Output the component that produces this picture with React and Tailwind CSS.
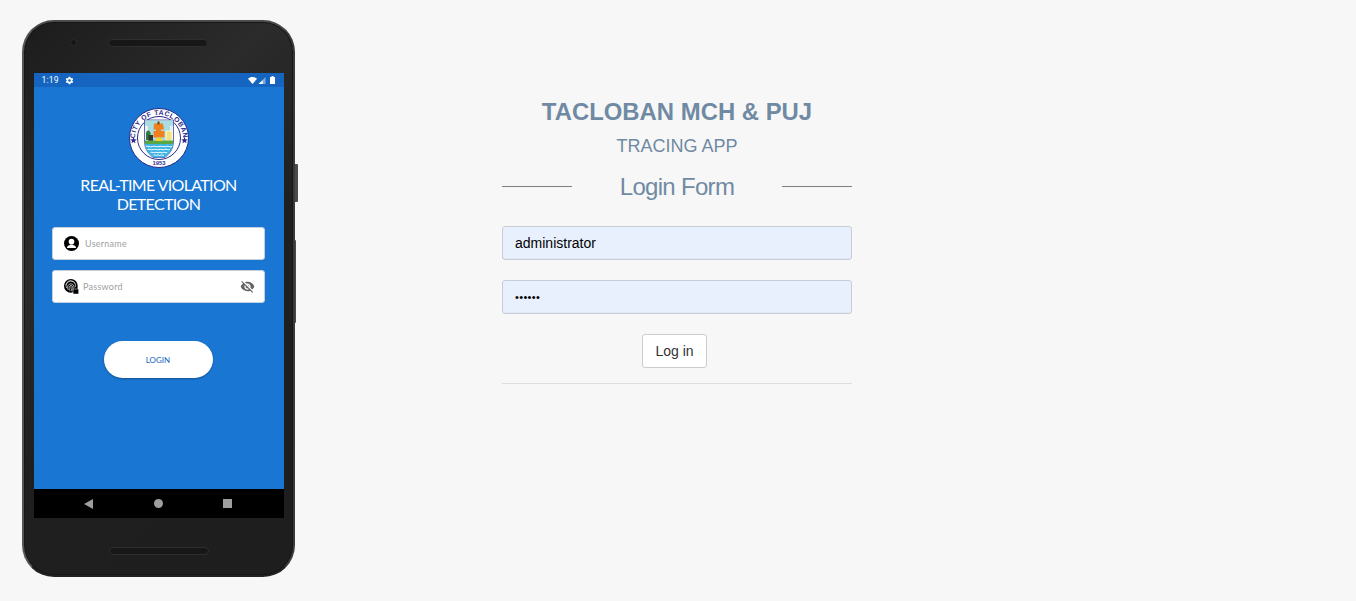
const sans = "font-['Liberation_Sans',Arial,sans-serif]";

function Seal() {
  return (
    <svg width="60" height="60" viewBox="0 0 60 60" className="block">
      <circle cx="30" cy="30" r="29.500" fill="#fff" stroke="#2b2c8c" strokeWidth="1" />
      <circle cx="30" cy="30" r="21.500" fill="#fff" stroke="#2b2c8c" strokeWidth="1" />
      <defs>
        <path id="sealArc" d="M6 31 A24 24 0 0 1 54 31" />
      </defs>
      <text fill="#2b2c8c" fontSize="6.800" fontWeight="700" fontFamily="Liberation Sans, sans-serif" letterSpacing="0.45">
        <textPath href="#sealArc" startOffset="50%" textAnchor="middle">CITY OF TACLOBAN</textPath>
      </text>
      <text x="30" y="57" textAnchor="middle" fill="#2b2c8c" fontSize="5.800" fontWeight="700" fontFamily="Liberation Sans, sans-serif">1953</text>
      <path d="M4.500 28l.9 2.300 2.500.1-2 1.500.7 2.400-2.100-1.400-2.100 1.400.7-2.400-2-1.500 2.500-.1z" fill="#2b2c8c" transform="translate(0 1)" />
      <path d="M55.500 28l.9 2.300 2.500.1-2 1.500.7 2.400-2.100-1.400-2.100 1.400.7-2.400-2-1.500 2.500-.1z" fill="#2b2c8c" transform="translate(0 1)" />
      <path d="M15.500 12h29v21c0 5-1.500 9-4 12l-4.500 4.500H24L19.500 45c-2.500-3-4-7-4-12z" fill="#e6f3f6" stroke="#2b2c8c" strokeWidth="0.700" />
      <path d="M16 12.500h28v5l-3 .5v15H19V18l-3-.5z" fill="#a9dde0" />
      <path d="M25 15.500h9l1 6h-3v1.500h3.500v6.500H24.500V23H27v-1.500h-2.500z" fill="#f07f1e" />
      <path d="M28.500 13.500h2v3h-2z" fill="#7a3a1a" />
      <path d="M17 25c1-3 3-3 4-1 1 1 1 2 0 3h-1v5h-3z" fill="#2f7d3a" />
      <path d="M19.500 27H24v6h-4.500z" fill="#333" />
      <path d="M37 23h6v10h-6z" fill="#f6e27a" stroke="#fff" strokeWidth="0.800" />
      <path d="M16 32.500h28V36H16z" fill="#5aa845" />
      <path d="M26.500 33a3.500 3.500 0 0 1 7 0z" fill="#f5d22f" />
      <path d="M16 36h28c-.3 3.500-1.500 6.500-3.500 9L36 49.200H24L19.500 45c-2-2.500-3.200-5.500-3.500-9z" fill="#3db4e6" />
      <path d="M17 38.500c2-1 4 1 6.500 0s4 1 6.500 0 4 1 6.500 0 4 1 6.500 0M18.500 41.500c2-1 3.700 1 5.800 0s3.700 1 5.700 0 3.700 1 5.700 0 3.300 1 5 0M21.500 44.500c2-1 3 1 4.300 0s3 1 4.200 0 3 1 4.200 0 2 1 4 0M24.500 47.200c2-1 2.500 1 3.500 0s2.500 1 3.500 0 2.500 1 3.500 0" fill="none" stroke="#fff" strokeWidth="1" />
    </svg>
  );
}

function PersonIcon() {
  return (
    <svg width="15" height="15" viewBox="0 0 24 24">
      <circle cx="12" cy="12" r="12" fill="#000" />
      <circle cx="12" cy="9" r="4.500" fill="#fff" />
      <path d="M4.800 19c0-3.500 4.200-5 7.200-5s7.200 1.500 7.200 5z" fill="#fff" />
    </svg>
  );
}

function FingerprintIcon() {
  return (
    <svg width="15" height="15" viewBox="0 0 24 24">
      <circle cx="11" cy="11" r="11" fill="#000" />
      <g fill="none" stroke="#fff" strokeWidth="1" strokeLinecap="round">
        <path d="M3.500 9A8 8 0 0 1 18 7" />
        <path d="M4 14a7.500 7.500 0 0 1 13-7.500c1.500 2 1.800 4 1.500 6" />
        <path d="M6.500 17a8 8 0 0 1-.5-6 5.300 5.300 0 0 1 10 .5c.4 1.500.4 3 .2 4" />
        <path d="M9.500 18.500C8 16 7.700 13.500 8.700 11.500a3 3 0 0 1 5.300 1c.3 1.500.3 3 0 4.500" />
        <path d="M11 11.500c0 3 .7 5.500 1.500 7.500" />
      </g>
      <rect x="14.500" y="16" width="9" height="8" rx="1" fill="#000" stroke="#fff" strokeWidth="0.800" />
      <path d="M17 16.500V15a2 2 0 0 1 4 0v1.500" fill="none" stroke="#000" strokeWidth="1.200" />
    </svg>
  );
}

function EyeOffIcon() {
  return (
    <svg width="15" height="15" viewBox="0 0 24 24" fill="#636363">
      <path d="M12 7c2.760 0 5 2.240 5 5 0 .650-.130 1.260-.360 1.830l2.920 2.920c1.510-1.260 2.700-2.890 3.430-4.750-1.730-4.390-6-7.500-11-7.500-1.400 0-2.740.250-3.980.700l2.160 2.160C10.740 7.130 11.350 7 12 7zM2 4.270l2.280 2.280.460.460C3.080 8.300 1.780 10.020 1 12c1.730 4.390 6 7.500 11 7.500 1.550 0 3.030-.300 4.380-.840l.420.420L19.730 22 21 20.730 3.270 3 2 4.270zM7.530 9.800l1.550 1.550c-.050.210-.080.430-.080.650 0 1.660 1.340 3 3 3 .220 0 .440-.030.650-.080l1.550 1.550c-.670.330-1.410.530-2.200.530-2.760 0-5-2.240-5-5 0-.790.200-1.530.530-2.200zm4.310-.780l3.150 3.150.020-.160c0-1.660-1.340-3-3-3l-.170.010z" />
    </svg>
  );
}

function PhoneInput({ icon, label, trailing, iconGap }) {
  return (
    <div className="flex items-center h-[33px] w-[213px] bg-white rounded-[3px] border border-[#c6cfdc] pl-[9px] pr-[9px]">
      <span className="flex w-[18px] justify-center">{icon}</span>
      <span className={`${iconGap} font-['Lato',sans-serif] text-[9px] tracking-[0.25px] text-[#a0a0a0]`}>{label}</span>
      {trailing && <span className="ml-auto flex">{trailing}</span>}
    </div>
  );
}

function StatusBar() {
  return (
    <div className="h-[14px] bg-[#1565c0] flex items-center pl-[8px] pr-[9px] text-white">
      <span className="pt-px font-['Roboto',sans-serif] text-[8.500px] leading-none tracking-[0.2px]">1:19</span>
      <svg className="ml-[6px]" width="9" height="9" viewBox="0 0 24 24" fill="#fff">
        <path d="M19.400 13c.100-.300.100-.700.100-1s0-.700-.100-1l2.100-1.600c.200-.200.200-.400.100-.600l-2-3.500c-.100-.200-.400-.300-.600-.200l-2.500 1a7.300 7.300 0 0 0-1.700-1l-.4-2.600c0-.300-.200-.500-.500-.500h-4c-.300 0-.500.200-.500.500l-.4 2.600c-.600.300-1.200.600-1.700 1l-2.500-1c-.200-.100-.500 0-.600.200l-2 3.500c-.100.200-.100.500.100.600L4.600 11c-.100.300-.100.700-.100 1s0 .700.100 1l-2.100 1.600c-.200.200-.200.400-.1.600l2 3.500c.100.200.400.300.600.200l2.500-1c.500.400 1.100.700 1.700 1l.4 2.600c0 .300.200.500.500.500h4c.300 0 .500-.200.500-.500l.4-2.600c.600-.300 1.200-.600 1.700-1l2.500 1c.200.100.500 0 .600-.200l2-3.500c.100-.200.100-.5-.1-.6zM12 15.500a3.500 3.500 0 1 1 0-7 3.500 3.500 0 0 1 0 7z" />
      </svg>
      <svg className="ml-auto" width="9" height="7" viewBox="0 0 18 14" fill="#fff"><path d="M9 14L0 3.500C2.500 1.200 5.500 0 9 0s6.500 1.200 9 3.500z" /></svg>
      <svg className="ml-[1px]" width="8" height="7" viewBox="0 0 10 10"><path d="M10 0v10H0z" fill="#fff" opacity="0.45" /><path d="M6 4.500V10H0z" fill="#fff" /></svg>
      <svg className="ml-[4px]" width="5" height="8" viewBox="0 0 5 8" fill="#fff"><path d="M1.500 0h2v1H5v7H0V1h1.500z" /></svg>
    </div>
  );
}

function Grille() {
  return (
    <span className="block w-[100px] h-[8px] rounded-full bg-[#171717] bg-[radial-gradient(#3c3c3c_0.5px,transparent_0.7px)] bg-[length:2px_2px] border border-[#2e2e2e]" />
  );
}

function Phone() {
  return (
    <div className="relative w-[273px] h-[557px] shrink-0">
      <span className="absolute left-[271px] top-[144px] w-[5px] h-[38px] bg-[#4a4a4a] rounded-r-[1px]" />
      <span className="absolute left-[271px] top-[220px] w-[3px] h-[83px] bg-[#4a4a4a] rounded-r-[1px]" />
      <div className="relative w-full h-full rounded-[32px] border-2 border-t-[#4a4a4a] border-l-[#555] border-r-[#3a3a3a] border-b-[#222] bg-[linear-gradient(135deg,#1c1c1c_0%,#2b2b2b_30%,#1f1f1f_55%,#1e1e1e_100%)] flex flex-col items-center overflow-hidden shadow-[inset_0_0_0_1px_#161616]">
        <div className="flex items-center h-[51px] w-full shrink-0 -translate-y-[5px]">
          <span className="ml-[46px] w-[7px] h-[7px] rounded-full bg-[#14141a] border border-[#2c2c2c]" />
          <span className="ml-[31px]"><Grille /></span>
        </div>
        <div className="w-[250px] h-[445px] shrink-0 flex flex-col">
          <StatusBar />
          <div className="flex-1 bg-[#1976d2] flex flex-col items-center pt-[21px]">
            <Seal />
            <div className="mt-[7px] text-center text-white font-['Lato',sans-serif] text-[16px] leading-[19px] tracking-[-0.65px]">
              <div>REAL-TIME VIOLATION</div>
              <div>DETECTION</div>
            </div>
            <div className="mt-[14px] flex flex-col gap-[10px]">
              <PhoneInput icon={<PersonIcon />} label="Username" iconGap="ml-[5px]" />
              <PhoneInput icon={<FingerprintIcon />} label="Password" iconGap="ml-[3px]" trailing={<EyeOffIcon />} />
            </div>
            <button className="mt-[38px] mr-px w-[109px] h-[37px] rounded-full bg-white shadow-[0_1px_2px_rgba(0,0,0,0.3)] font-['Lato',sans-serif] text-[8px] text-[#1565c0]">LOGIN</button>
          </div>
          <div className="h-[29px] bg-black flex items-center">
            <svg className="ml-[50px]" width="9" height="10" viewBox="0 0 9 10" fill="#9e9e9e"><path d="M9 0v10L0 5z" /></svg>
            <span className="ml-[61px] w-[9px] h-[9px] rounded-full bg-[#9e9e9e]" />
            <span className="ml-[60px] w-[9px] h-[9px] bg-[#9e9e9e]" />
          </div>
        </div>
        <div className="mt-[29px]"><Grille /></div>
      </div>
    </div>
  );
}

function Field({ value, dots }) {
  return (
    <div className={`flex items-center h-[34px] rounded-[3px] border border-[#c8ccd4] bg-[#e8f0fe] pl-[12px] ${dots ? "text-[11px] tracking-[0.35px]" : "text-[14px]"} text-black shadow-[inset_0_-1px_1px_rgba(0,0,0,0.03)]`}>
      {value}
    </div>
  );
}

export default function App() {
  return (
    <div className={`${sans} h-[601px] w-[1356px] bg-[#f7f7f7] flex pl-[22px] pt-[20px] overflow-hidden`}>
      <Phone />
      <div className="ml-[207px] w-[350px] flex flex-col items-stretch">
        <h1 className="mt-[77px] text-center font-bold text-[23.900px] leading-[30px] text-[#708aa3]">TACLOBAN MCH &amp; PUJ</h1>
        <h2 className="mt-[9px] text-center text-[18px] leading-[20px] text-[#708aa3]">TRACING APP</h2>
        <div className="mt-[14px] flex items-center justify-between h-[32px]">
          <span className="w-[70px] h-px bg-[#808080]" />
          <span className="mt-[2px] text-[24px] tracking-[-0.7px] text-[#708aa3] leading-[32px]">Login Form</span>
          <span className="w-[70px] h-px bg-[#808080]" />
        </div>
        <div className="mt-[24px] flex flex-col gap-[20px]">
          <Field value="administrator" />
          <Field value="••••••" dots />
        </div>
        <div className="mt-[20px] flex justify-center pr-[5px]">
          <button className="h-[34px] w-[65px] rounded-[3px] border border-[#ccc] bg-white text-[14px] text-[#333]">Log in</button>
        </div>
        <div className="mt-[15px] h-px bg-[#ddd]" />
      </div>
    </div>
  );
}
